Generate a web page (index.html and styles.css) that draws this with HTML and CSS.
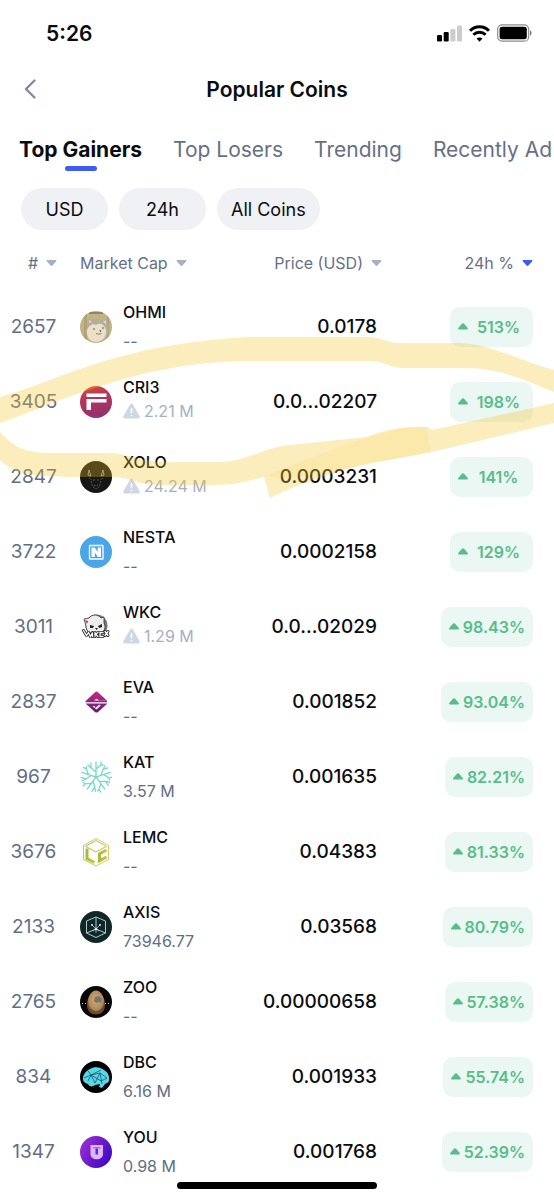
FILE: index.html
```html
<!DOCTYPE html>
<html lang="en">
<head>
    <meta charset="UTF-8">
    <meta name="viewport" content="width=device-width, initial-scale=1.0">
    <title>Popular Coins</title>
    <link rel="stylesheet" href="styles.css">
</head>
<body>
    <!-- Shared icons -->
    <svg class="defs" width="0" height="0" aria-hidden="true">
        <symbol id="up" viewBox="0 0 10 7"><path d="M5 .2c.5 0 .8.2 1.1.5l3.400 4c.8 1 .4 1.900-.8 1.900H1.300C.1 6.600-.3 5.700.5 4.700l3.400-4C4.200.4 4.500.2 5 .2z"/></symbol>
        <symbol id="down" viewBox="0 0 12 8"><path d="M1.500.8h9c.8 0 1.100.8.6 1.400L7 6.700c-.6.6-1.400.6-2 0L.9 2.200C.4 1.600.7.8 1.500.8z"/></symbol>
        <symbol id="warn" viewBox="0 0 16 15"><path d="M8 .5c.6 0 1 .3 1.300.8l6.300 11c.6 1.100 0 2.200-1.300 2.200H1.700c-1.300 0-1.900-1.100-1.300-2.200l6.300-11C7 .8 7.400.5 8 .5z"/><path d="M8 5v4.500M8 11.200v1.300" stroke="#fff" stroke-width="1.500"/></symbol>
    </svg>

    <div class="status-bar">
        <span class="time">5:26</span>
        <div class="status-icons">
            <svg width="25" height="17" viewBox="0 0 25 17">
                <rect x="0" y="10" width="5" height="6.500" rx="1.300"/>
                <rect x="6.700" y="7" width="5" height="9.500" rx="1.300"/>
                <rect x="13.400" y="4" width="5" height="12.500" rx="1.300" fill="#ccc"/>
                <rect x="20" y=".5" width="5" height="16" rx="1.300" fill="#ccc"/>
            </svg>
            <svg width="21" height="17" viewBox="0 0 20 16" fill="none" stroke="#000" stroke-width="2.800">
                <path d="M1 5.400C6 .4 14 .4 19 5.400"/>
                <path d="M4.200 9.200c3.300-3.200 8.300-3.200 11.600 0"/>
                <path d="M10 15.800l-2.800-3c1.500-1.400 4.100-1.400 5.600 0z" fill="#000" stroke="none"/>
            </svg>
            <svg width="35" height="18" viewBox="0 0 35 18">
                <rect x=".7" y=".8" width="31" height="16.400" rx="4.500" fill="none" stroke="#8c8c8c" stroke-width="1.200"/>
                <rect x="2.600" y="2.700" width="27.200" height="12.600" rx="2.500"/>
                <path d="M33 6.500c2 .5 2 4.500 0 5z" fill="#777"/>
            </svg>
        </div>
    </div>

    <header class="header">
        <button class="back" aria-label="Back">
            <svg width="12" height="20" viewBox="0 0 12 20"><path d="M10.500 1.500L2 10l8.500 8.500" fill="none" stroke="#8088a0" stroke-width="2.300" stroke-linecap="round" stroke-linejoin="round"/></svg>
        </button>
        <h1>Popular Coins</h1>
    </header>

    <nav class="tabs">
        <a href="#gainers" class="active">Top Gainers</a>
        <a href="#losers">Top Losers</a>
        <a href="#trending">Trending</a>
        <a href="#recent">Recently Ad</a>
    </nav>

    <div class="filters">
        <button>USD</button>
        <button>24h</button>
        <button>All Coins</button>
    </div>

    <main class="list">
        <table>
            <thead>
                <tr>
                    <th class="rank"><button># <svg><use href="#down"/></svg></button></th>
                    <th class="coin"><button>Market Cap <svg><use href="#down"/></svg></button></th>
                    <th class="price"><button>Price (USD) <svg><use href="#down"/></svg></button></th>
                    <th class="change"><button class="sorted">24h % <svg><use href="#down"/></svg></button></th>
                </tr>
            </thead>
            <tbody>
                <tr>
                    <td class="rank">2657</td>
                    <td class="coin"><div class="coin-box">
                        <svg class="logo" viewBox="0 0 32 32">
                            <clipPath id="round"><circle cx="16" cy="16" r="16"/></clipPath>
                            <g clip-path="url(#round)">
                                <path fill="#c3b384" d="M0 0h32v32H0z"/>
                                <path fill="#b1a474" d="M4 5l3-3v28H4zM27 3h2v26h-2z"/>
                                <path fill="#8f8767" d="M9 1h14v2H9z"/>
                                <path fill="#b3aea0" d="M7 16L8 7l5 2c3-2 7-2 9 0l5-2 1 10c2 8-4 14-11 14S4 25 7 16z"/>
                                <path fill="#e2d8c6" d="M9 12V9l3 2zM23 11l3-2v4z"/>
                                <path fill="#ecdfc8" d="M7 19c2-5 6-7 9-5 4-3 9 0 10 5 1 7-4 12-10 12S6 26 7 19z"/>
                                <circle cx="14" cy="18" r=".8" fill="#51483c"/><circle cx="23" cy="17" r=".8" fill="#51483c"/>
                                <path d="M19 19.500h2.500l-1 1.500z" fill="#3e382f"/>
                                <path d="M16 22.500c1.500.8 4 .8 5.500 0" fill="none" stroke="#6b6152" stroke-width=".8"/>
                            </g>
                        </svg>
                        <div><p class="name">OHMI</p><p class="cap">--</p></div>
                    </div></td>
                    <td class="price">0.0178</td>
                    <td class="change"><span class="badge"><svg><use href="#up"/></svg><b>513%</b></span></td>
                </tr>
                <tr>
                    <td class="rank">3405</td>
                    <td class="coin"><div class="coin-box">
                        <svg class="logo" viewBox="0 0 32 32">
                            <linearGradient id="cri" x1=".2" y1="0" x2=".5" y2="1"><stop stop-color="#d4483c"/><stop offset=".4" stop-color="#b5345c"/><stop offset="1" stop-color="#90336f"/></linearGradient>
                            <circle cx="16" cy="16" r="16" fill="url(#cri)"/>
                            <path fill="#fff" d="M6.500 7.500h20v3.600h-20zM6.500 13h20v3.600H11V24H6.500z"/>
                        </svg>
                        <div><p class="name">CRI3</p><p class="cap warn"><svg><use href="#warn"/></svg>2.21 M</p></div>
                    </div></td>
                    <td class="price">0.0...02207</td>
                    <td class="change"><span class="badge"><svg><use href="#up"/></svg><b>198%</b></span></td>
                </tr>
                <tr>
                    <td class="rank">2847</td>
                    <td class="coin"><div class="coin-box">
                        <svg class="logo" viewBox="0 0 32 32">
                            <circle cx="16" cy="16" r="16" fill="#151618"/>
                            <g fill="none" stroke="#6d6e6b" stroke-width=".7">
                                <path d="M9 9l-1 5 3 1-2-6M23 9l1 5-3 1 2-6" stroke="#c4c3b8"/>
                                <path d="M9 17l3 2M23 17l-3 2M11 20l2 6 3 2 3-2 2-6M14 18v3M18 18v3M14 24l2 1 2-1" stroke-dasharray="2 1"/>
                            </g>
                        </svg>
                        <div><p class="name">XOLO</p><p class="cap warn"><svg><use href="#warn"/></svg>24.24 M</p></div>
                    </div></td>
                    <td class="price">0.0003231</td>
                    <td class="change"><span class="badge"><svg><use href="#up"/></svg><b>141%</b></span></td>
                </tr>
                <tr>
                    <td class="rank">3722</td>
                    <td class="coin"><div class="coin-box">
                        <svg class="logo" viewBox="0 0 32 32">
                            <circle cx="16" cy="16" r="16" fill="#4ba6e8"/>
                            <rect x="9.500" y="9.500" width="13.500" height="13.500" rx=".6" fill="none" stroke="#fff" stroke-width="1.300"/>
                            <path fill="#fff" d="M11.500 11.500h3.200l3 4.500v-4.500H21V21h-3.200l-3-4.500V21h-3.300z"/>
                        </svg>
                        <div><p class="name">NESTA</p><p class="cap">--</p></div>
                    </div></td>
                    <td class="price">0.0002158</td>
                    <td class="change"><span class="badge"><svg><use href="#up"/></svg><b>129%</b></span></td>
                </tr>
                <tr>
                    <td class="rank">3011</td>
                    <td class="coin"><div class="coin-box">
                        <svg class="logo" viewBox="0 0 32 32">
                            <circle cx="16.500" cy="14.500" r="11" fill="#777"/>
                            <path d="M6 15L4 8l5-1c3-4 9-4 12 0l3-1v6c3 6-1 11-8 11-6 0-10-3-10-8z" fill="#ededed" stroke="#333" stroke-width=".8"/>
                            <path d="M5 9l3 1-1 3z" fill="#c4302b"/>
                            <path d="M10 14l4 1-1 2h-3zM18 15l4-2v3l-3 1zM15 17h3l-1.500 2z" fill="#222"/>
                            <path id="bones" d="M3.500 19.500l3 5 2-3 2 4 2-4v4M15 21.500v4m0-2l3-2m-2 2l2 2m5-4h-3v4h3m2-5l3 4m0-4l-3 4" fill="none" stroke="#222" stroke-width="3" stroke-linejoin="round" stroke-linecap="round"/>
                            <path d="M3.500 19.500l3 5 2-3 2 4 2-4v4M15 21.500v4m0-2l3-2m-2 2l2 2m5-4h-3v4h3m2-5l3 4m0-4l-3 4" fill="none" stroke="#fff" stroke-width="1.300" stroke-linecap="round"/>
                        </svg>
                        <div><p class="name">WKC</p><p class="cap warn"><svg><use href="#warn"/></svg>1.29 M</p></div>
                    </div></td>
                    <td class="price">0.0...02029</td>
                    <td class="change"><span class="badge"><svg><use href="#up"/></svg><b>98.43%</b></span></td>
                </tr>
                <tr>
                    <td class="rank">2837</td>
                    <td class="coin"><div class="coin-box">
                        <svg class="logo" viewBox="0 0 32 32">
                            <linearGradient id="eva" x1="0" y1="0" x2="0" y2="1"><stop stop-color="#c92882"/><stop offset="1" stop-color="#56207c"/></linearGradient>
                            <path fill="url(#eva)" d="M15 6.200c1-.8 2-.8 3 0l8.500 8H19l-2.500-1.500-2.500 1.700h13v1.800H5.500v-1zM5.500 17.500h15.300L15 22v-2h-2.500l4 3.500 4.500-4.200h-2l1.800-1.800h6.700l-9.500 8.500c-1 .8-2 .8-3 0z"/>
                        </svg>
                        <div><p class="name">EVA</p><p class="cap">--</p></div>
                    </div></td>
                    <td class="price">0.001852</td>
                    <td class="change"><span class="badge"><svg><use href="#up"/></svg><b>93.04%</b></span></td>
                </tr>
                <tr>
                    <td class="rank">967</td>
                    <td class="coin"><div class="coin-box">
                        <svg class="logo" viewBox="0 0 32 32">
                            <g fill="none" stroke="#72dcc3" stroke-width="1.300" stroke-linecap="round">
                                <g id="branch"><path d="M16 17V1M16 11l-5-4V2M16 8l5-4V1M11 7L8 4M21 4l2 0"/></g>
                                <use href="#branch" transform="rotate(72 16 16)"/>
                                <use href="#branch" transform="rotate(144 16 16)"/>
                                <use href="#branch" transform="rotate(216 16 16)"/>
                                <use href="#branch" transform="rotate(288 16 16)"/>
                            </g>
                        </svg>
                        <div><p class="name">KAT</p><p class="cap">3.57 M</p></div>
                    </div></td>
                    <td class="price">0.001635</td>
                    <td class="change"><span class="badge"><svg><use href="#up"/></svg><b>82.21%</b></span></td>
                </tr>
                <tr>
                    <td class="rank">3676</td>
                    <td class="coin"><div class="coin-box">
                        <svg class="logo" viewBox="0 0 32 32">
                            <linearGradient id="lemc"><stop stop-color="#a5bd38"/><stop offset="1" stop-color="#d9bd3e"/></linearGradient>
                            <g fill="none" stroke="url(#lemc)">
                                <path d="M16 2.500l12.500 7v14L16 30 3.500 23.500v-14z" stroke-width=".8"/>
                                <path d="M16 4.500l10.500 5.800L16 16 5.500 10.300z" stroke-width="1"/>
                                <path d="M7 12.500v10l7.500 4" stroke-width="3"/>
                                <path d="M26.500 14l-7 3.800v7l7-3.800" stroke-width="3"/>
                            </g>
                        </svg>
                        <div><p class="name">LEMC</p><p class="cap">--</p></div>
                    </div></td>
                    <td class="price">0.04383</td>
                    <td class="change"><span class="badge"><svg><use href="#up"/></svg><b>81.33%</b></span></td>
                </tr>
                <tr>
                    <td class="rank">2133</td>
                    <td class="coin"><div class="coin-box">
                        <svg class="logo" viewBox="0 0 32 32">
                            <circle cx="16" cy="16" r="16" fill="#10272a"/>
                            <g fill="none" stroke="#b8c8c7" stroke-width="1">
                                <path d="M16 6l9.500 4v12L16 26.500 6.500 22V10zM16 6v12M6.500 22l9.500-4 9.500 4"/>
                                <path d="M12 14l4 4 4-4M13 20l3-2 3 2M16 18v4" stroke-width=".8"/>
                            </g>
                            <g fill="#e5eded"><circle cx="12" cy="14" r="1"/><circle cx="20" cy="14" r="1"/><circle cx="16" cy="18" r="1.300"/></g>
                        </svg>
                        <div><p class="name">AXIS</p><p class="cap">73946.77</p></div>
                    </div></td>
                    <td class="price">0.03568</td>
                    <td class="change"><span class="badge"><svg><use href="#up"/></svg><b>80.79%</b></span></td>
                </tr>
                <tr>
                    <td class="rank">2765</td>
                    <td class="coin"><div class="coin-box">
                        <svg class="logo" viewBox="0 0 32 32">
                            <radialGradient id="zoo" cy=".4"><stop stop-color="#cdaa82"/><stop offset=".8" stop-color="#b4895a"/><stop offset="1" stop-color="#6b4930"/></radialGradient>
                            <circle cx="16" cy="16" r="16" fill="#070707"/>
                            <path fill="url(#zoo)" d="M16 4.500c5 0 9 8 9 14 0 7-4 10-9 10s-9-3-9-10c0-6 4-14 9-14z"/>
                            <path fill="#77766a" d="M15 11l4-1 3 3-1 4-2-1-3 1-2-2z"/>
                            <path d="M2 17.500h6M25 17.500h6" stroke="#ddd" stroke-dasharray="1 2"/>
                        </svg>
                        <div><p class="name">ZOO</p><p class="cap">--</p></div>
                    </div></td>
                    <td class="price">0.00000658</td>
                    <td class="change"><span class="badge"><svg><use href="#up"/></svg><b>57.38%</b></span></td>
                </tr>
                <tr>
                    <td class="rank">834</td>
                    <td class="coin"><div class="coin-box">
                        <svg class="logo" viewBox="0 0 32 32">
                            <circle cx="16" cy="16" r="16"/>
                            <path fill="#5bd5e8" d="M3 18c0-5 3-8 7-10 4-3 11-2 14 1 4 2 6 7 5 11-1 2-3 2-4 3l-3 4-3-1 1-3-5 1c-2 2-6 2-7-1-3-1-5-2-5-5z"/>
                            <path d="M4 17l7-3 9-2 7 5-6 3-10-6 4 8 5-10 2 11M8 10l3 4-3 6M11 14l10-5" fill="none" stroke="#0b4a57" stroke-width=".7"/>
                        </svg>
                        <div><p class="name">DBC</p><p class="cap">6.16 M</p></div>
                    </div></td>
                    <td class="price">0.001933</td>
                    <td class="change"><span class="badge"><svg><use href="#up"/></svg><b>55.74%</b></span></td>
                </tr>
                <tr>
                    <td class="rank">1347</td>
                    <td class="coin"><div class="coin-box">
                        <svg class="logo" viewBox="0 0 32 32">
                            <linearGradient id="you" x1="0" y1=".2" x2="1" y2=".8"><stop stop-color="#9c2fd0"/><stop offset="1" stop-color="#3a06c8"/></linearGradient>
                            <circle cx="16" cy="16" r="16" fill="url(#you)"/>
                            <path d="M10.500 9h12.500v9c0 7-12.500 7-12.500 0z" fill="#d9b8f1"/>
                            <path d="M13 11.800h7.500" stroke="#8f4fd8"/>
                            <path d="M15.500 12.500h2.500v6h-2.500z" fill="#6b25cc"/>
                        </svg>
                        <div><p class="name">YOU</p><p class="cap">0.98 M</p></div>
                    </div></td>
                    <td class="price">0.001768</td>
                    <td class="change"><span class="badge"><svg><use href="#up"/></svg><b>52.39%</b></span></td>
                </tr>
            </tbody>
        </table>

        <!-- Marker strokes around the CRI3 row -->
        <svg class="marker" viewBox="0 330 554 170" preserveAspectRatio="none" aria-hidden="true">
            <path d="M0 397C40 385 55 377 83 368C135 350 185 341 247 337H368C382 337 385 343 400 343H461C490 344 520 361 554 370V392C530 382 500 368 467 368H405C388 368 385 361 368 361H240C180 363 135 374 83 392C50 403 25 414 0 423z"/>
            <path d="M0 432C15 448 25 453 53 453H110C130 454 140 462 167 462H220C250 461 260 448 290 445L367 437C390 428 400 427 427 427L432 430L554 403V423L432 452L367 464Q310 478 270 498L264 477C245 482 235 485 217 485H155C135 484 130 477 113 477H80C30 477 15 474 0 460z"/>
            <path class="second" d="M266 476C300 462 360 438 388 432Q408 426 427 427L431 452L367 464Q320 475 285 478z"/>
        </svg>
    </main>

    <div class="home-bar"></div>
</body>
</html>
```
FILE: styles.css
```css
* {
    box-sizing: border-box;
}

body {
    margin: 0;
    min-height: 100vh;
    font-family: 'Inter', Arial, sans-serif;
    background: #fff;
    color: #0b0c0f;
    overflow-x: hidden;
}

h1, p {
    margin: 0;
}

button {
    padding: 0;
    border: none;
    background: none;
    color: inherit;
    font: inherit;
    cursor: pointer;
}

svg {
    display: block;
    flex-shrink: 0;
}

.defs {
    position: absolute;
}

/* Top of the screen */
.status-bar {
    display: flex;
    align-items: center;
    justify-content: space-between;
    height: 66px;
    padding: 0 22px 0 46px;
}

.time {
    font-size: 21px;
    font-weight: 600;
}

.status-icons {
    display: flex;
    align-items: center;
    gap: 7px;
}

.header {
    display: grid;
    grid-template-columns: 60px 1fr 60px;
    align-items: center;
    height: 46px;
}

.back {
    display: flex;
    align-items: center;
    height: 44px;
    padding-left: 24px;
}

h1 {
    text-align: center;
    font-size: 21px;
    font-weight: 600;
}

.tabs {
    display: flex;
    gap: 31px;
    height: 60px;
    padding: 24px 0 0 19px;
    overflow: hidden;
    white-space: nowrap;
}

.tabs a {
    display: flex;
    flex-direction: column;
    align-items: center;
    font-size: 21px;
    line-height: 28px;
    color: #667085;
    text-decoration: none;
}

.tabs .active {
    color: #0b0c0f;
    font-weight: 700;
}

.tabs .active::after {
    content: '';
    width: 32px;
    height: 5px;
    margin-top: 2px;
    border-radius: 3px;
    background: #3e5bf2;
}

.filters {
    display: flex;
    gap: 11px;
    padding: 16px 21px 8px;
}

.filters button {
    min-width: 87px;
    height: 42px;
    padding: 0 14px;
    border-radius: 21px;
    background: #eff1f5;
    font-size: 18px;
}

/* Coin table */
.list {
    position: relative;
}

table {
    width: 100%;
    table-layout: fixed;
    border-collapse: collapse;
}

th, td {
    padding: 0;
    text-align: left;
}

th {
    height: 51px;
    padding-bottom: 2px;
    font-size: 16px;
    font-weight: 400;
    color: #667085;
}

th button {
    display: inline-flex;
    align-items: center;
    gap: 8px;
    white-space: nowrap;
}

th svg {
    width: 11px;
    height: 8px;
    fill: #a6b0c3;
}

th .sorted svg {
    fill: #3e5bf2;
}

td {
    height: 75px;
    font-size: 19px;
}

.rank {
    width: 80px;
}

th.rank {
    padding-left: 28px;
}

td.rank {
    padding-right: 13px;
    text-align: center;
    color: #616e85;
}

.price {
    width: 136px;
    text-align: right;
}

td.price {
    padding-right: 5px;
    font-weight: 500;
}

.change {
    width: 172px;
    padding-right: 21px;
    text-align: right;
}

.coin-box {
    display: flex;
    align-items: center;
    gap: 11px;
}

.logo {
    width: 32px;
    height: 32px;
}

.name, .cap {
    font-size: 16px;
    line-height: 20px;
}

.name {
    font-weight: 500;
}

.cap {
    margin-top: 9px;
    color: #616e85;
}

.cap.warn {
    display: flex;
    align-items: center;
    gap: 4px;
    margin: 4px 0 5px;
    color: #a6b0c3;
}

.warn svg {
    width: 17px;
    height: 16px;
    fill: #cfd6e4;
}

.badge {
    display: inline-flex;
    align-items: center;
    gap: 4px;
    height: 40px;
    padding: 0 8px;
    border-radius: 10px;
    background: #eaf7f3;
    color: #58bd88;
    font-size: 16px;
    vertical-align: middle;
}

.badge svg {
    width: 10px;
    height: 7px;
    fill: #58bd88;
}

.badge b {
    min-width: 53px;
    font-weight: 600;
    text-align: center;
}

/* Highlighter drawn over the rows */
.marker {
    position: absolute;
    top: 92px;
    left: 0;
    width: 100%;
    height: 170px;
    fill: rgba(245, 195, 38, 0.3);
    pointer-events: none;
}

.marker .second {
    fill: rgba(245, 195, 38, 0.12);
}

.home-bar {
    position: fixed;
    bottom: 11px;
    left: 32%;
    width: 36%;
    height: 7px;
    border-radius: 4px;
    background: #000;
}
```
